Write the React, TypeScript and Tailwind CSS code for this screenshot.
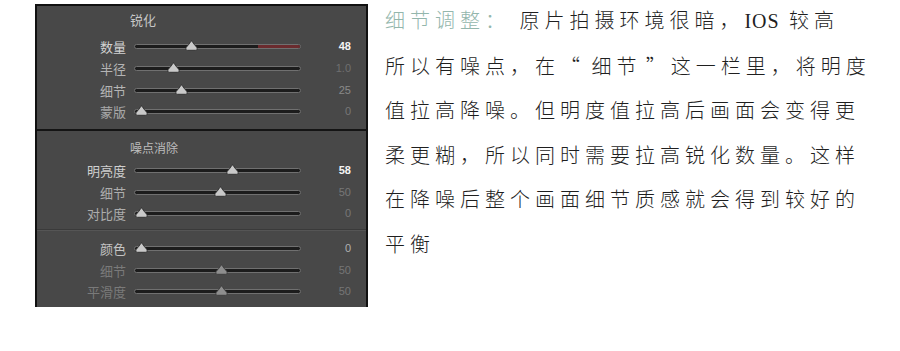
const cjk = "font-['Noto_Sans_CJK_SC','Noto_Sans',sans-serif]";

type Row = {
  label: string;
  value: string;
  pos: number;
  labelColor: string;
  valueColor: string;
  bold?: boolean;
  dim?: boolean;
  red?: boolean;
};

const sharpen: Row[] = [
  { label: "数量", value: "48", pos: 56, labelColor: "text-[#d2d2d2]", valueColor: "text-[#f4f4f4]", bold: true, red: true },
  { label: "半径", value: "1.0", pos: 38, labelColor: "text-[#b4b4b4]", valueColor: "text-[#6f6f6f]" },
  { label: "细节", value: "25", pos: 46, labelColor: "text-[#b4b4b4]", valueColor: "text-[#8a8a8a]" },
  { label: "蒙版", value: "0", pos: 6, labelColor: "text-[#a8a8a8]", valueColor: "text-[#777777]" },
];

const noise: Row[] = [
  { label: "明亮度", value: "58", pos: 97, labelColor: "text-[#cfcfcf]", valueColor: "text-[#f4f4f4]", bold: true },
  { label: "细节", value: "50", pos: 85, labelColor: "text-[#adadad]", valueColor: "text-[#777777]" },
  { label: "对比度", value: "0", pos: 6, labelColor: "text-[#adadad]", valueColor: "text-[#777777]" },
];

const color: Row[] = [
  { label: "颜色", value: "0", pos: 6, labelColor: "text-[#c4c4c4]", valueColor: "text-[#b0b0b0]" },
  { label: "细节", value: "50", pos: 86, labelColor: "text-[#7a7a7a]", valueColor: "text-[#767676]", dim: true },
  { label: "平滑度", value: "50", pos: 86, labelColor: "text-[#7a7a7a]", valueColor: "text-[#767676]", dim: true },
];

function Thumb({ dim }: { dim?: boolean }) {
  return (
    <svg width="13" height="11" viewBox="0 0 12 10">
      <path
        d="M6 0.8 C6.8 0.8 7.2 2.6 8.6 4.2 C10.4 6 11.2 6.6 11.2 8 C11.2 9.2 10.4 9.4 9.6 9.4 L2.4 9.4 C1.6 9.4 0.8 9.2 0.8 8 C0.8 6.6 1.6 6 3.4 4.2 C4.8 2.6 5.2 0.8 6 0.8 Z"
        fill={dim ? "#8e8e8e" : "#c9c9c9"}
        stroke={dim ? "#3a3a3a" : "#2a2a2a"}
        strokeWidth="0.8"
      />
    </svg>
  );
}

function Slider({ row }: { row: Row }) {
  return (
    <div className="flex h-[21.67px] items-center">
      <div className={`${cjk} w-[89px] shrink-0 text-right text-[13px] leading-none ${row.labelColor}`}>
        {row.label}
      </div>
      <div className="relative ml-[8px] h-[5px] w-[167px] shrink-0 rounded-full border border-[#707070] bg-[#1c1c1c]">
        {row.red && (
          <div className="absolute right-0 top-0 h-full w-[42px] rounded-r-full bg-[#6b2b2e]" />
        )}
        <div className="absolute bottom-[-3px]" style={{ left: row.pos - 6.5 }}>
          <Thumb dim={row.dim} />
        </div>
      </div>
      <div
        className={`w-[50px] shrink-0 text-right font-['Liberation_Sans',sans-serif] text-[11px] leading-none ${row.valueColor} ${
          row.bold ? "font-bold" : ""
        }`}
      >
        {row.value}
      </div>
    </div>
  );
}

function Panel() {
  return (
    <div className="flex h-[303px] w-[333px] shrink-0 flex-col border-x-2 border-t-2 border-[#111111] bg-[#484848]">
      <div className="flex flex-col pt-[4px] pb-[6px]">
        <div className={`${cjk} h-[20px] pl-[93px] text-[13px] leading-[20px] text-[#c6c6c6]`}>锐化</div>
        <div className="mt-[6px] flex flex-col">
          {sharpen.map((r) => (
            <Slider key={r.label} row={r} />
          ))}
        </div>
      </div>
      <div className="h-[2px] bg-[#141414]" />
      <div className="flex flex-col pt-[7px] pb-[4px]">
        <div className={`${cjk} h-[20px] pl-[93px] text-[12px] leading-[20px] text-[#bdbdbd]`}>噪点消除</div>
        <div className="mt-[2px] flex flex-col">
          {noise.map((r) => (
            <Slider key={r.label} row={r} />
          ))}
        </div>
      </div>
      <div className="h-[1px] bg-[#3a3a3a]" />
      <div className="h-[1px] bg-[#555555]" />
      <div className="flex flex-col pt-[7px]">
        {color.map((r) => (
          <Slider key={r.label + r.value + r.pos} row={r} />
        ))}
      </div>
    </div>
  );
}

const body = `${cjk} whitespace-nowrap text-[20px] font-light leading-[44.6px] tracking-[5px] text-[#1f1f1f]`;

export default function App() {
  return (
    <div className="flex h-[351px] w-[900px] bg-white pl-[35px] pt-[4px]">
      <Panel />
      <div className={`ml-[17px] -mt-[6px] flex flex-col ${body}`}>
        <div>
          <span className="text-[#93b6ac]">细节调整：</span> 原片拍摄环境很暗，
          <span className="font-['Liberation_Serif',serif] font-normal tracking-[1px]">IOS</span> 较高
        </div>
        <div>
          所以有噪点，在“<span className="tracking-[2px]"> </span>细节<span className="tracking-[0px]"> </span>”这一栏里，将明度
        </div>
        <div>值拉高降噪。但明度值拉高后画面会变得更</div>
        <div>柔更糊，所以同时需要拉高锐化数量。这样</div>
        <div>在降噪后整个画面细节质感就会得到较好的</div>
        <div>平衡</div>
      </div>
    </div>
  );
}
